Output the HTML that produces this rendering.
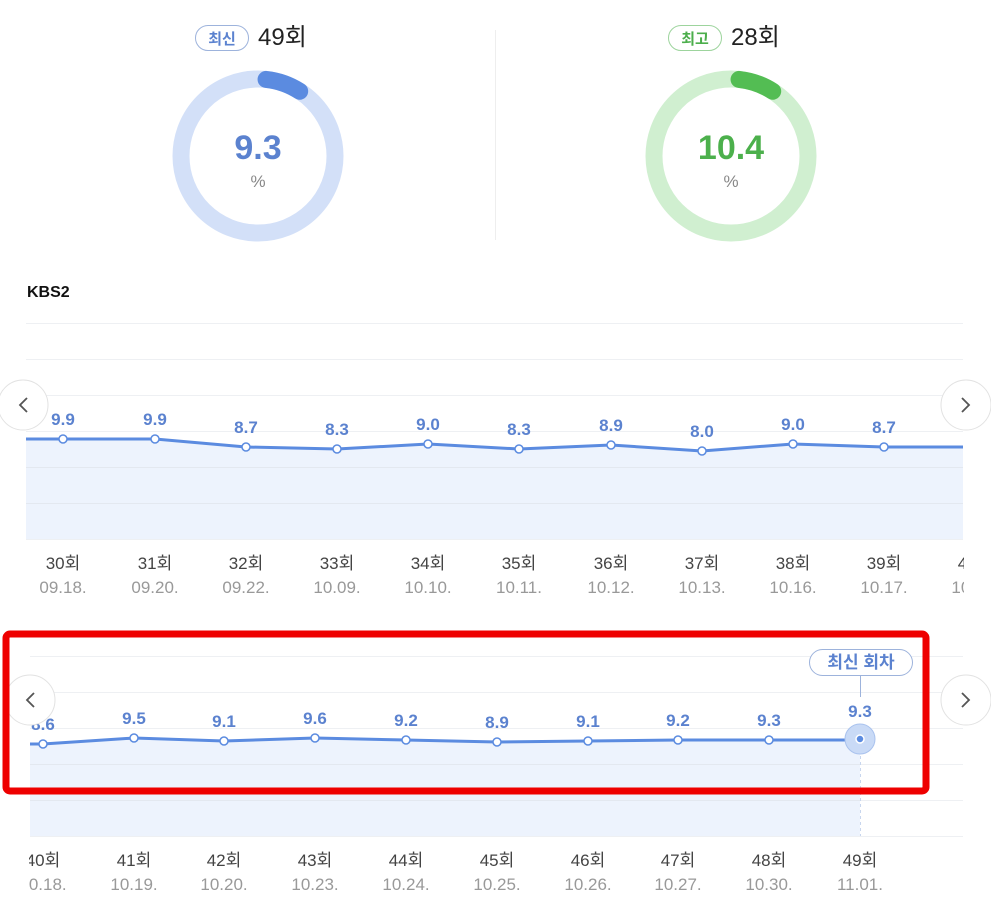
<!DOCTYPE html>
<html><head><meta charset="utf-8"><style>
body{margin:0;width:991px;height:917px;background:#fff;overflow:hidden;font-family:"Liberation Sans","Noto Sans CJK KR",sans-serif;}
svg text{font-family:"Liberation Sans","Noto Sans CJK KR",sans-serif;}
</style></head><body>
<svg width="991" height="917" viewBox="0 0 991 917" xmlns="http://www.w3.org/2000/svg">
<!-- header -->
<rect x="195.5" y="25.5" width="53" height="25" rx="12.5" fill="#fff" stroke="#9db3dc"/>
<text x="222" y="44" font-size="15" fill="#5b82cf" text-anchor="middle" font-weight="bold">최신</text>
<text x="258" y="45" font-size="24" fill="#222">49회</text>
<rect x="668.5" y="25.5" width="53" height="25" rx="12.5" fill="#fff" stroke="#9dd49d"/>
<text x="695" y="44" font-size="15" fill="#4cae4c" text-anchor="middle" font-weight="bold">최고</text>
<text x="731" y="45" font-size="24" fill="#222">28회</text>
<line x1="495.5" y1="30" x2="495.5" y2="240" stroke="#eee"/>
<circle cx="258" cy="156" r="77" fill="none" stroke="#d3e0f8" stroke-width="17"/>
<circle cx="258" cy="156" r="77" fill="none" stroke="#5b8be0" stroke-width="17" stroke-linecap="round" stroke-dasharray="36 500" transform="rotate(-84 258 156)"/>
<text x="258" y="159" font-size="34" font-weight="bold" fill="#5b82cf" text-anchor="middle">9.3</text>
<text x="258" y="187" font-size="17" fill="#888" text-anchor="middle">%</text>
<circle cx="731" cy="156" r="77" fill="none" stroke="#d0efd0" stroke-width="17"/>
<circle cx="731" cy="156" r="77" fill="none" stroke="#53bd53" stroke-width="17" stroke-linecap="round" stroke-dasharray="36 500" transform="rotate(-84 731 156)"/>
<text x="731" y="159" font-size="34" font-weight="bold" fill="#4cb04c" text-anchor="middle">10.4</text>
<text x="731" y="187" font-size="17" fill="#888" text-anchor="middle">%</text>
<text x="27" y="297" font-size="16" font-weight="bold" fill="#111">KBS2</text>

<!-- chart 1 -->
<g stroke="#eef0f3">
<line x1="26" y1="323.5" x2="963" y2="323.5"/><line x1="26" y1="359.5" x2="963" y2="359.5"/><line x1="26" y1="395.5" x2="963" y2="395.5"/><line x1="26" y1="431.5" x2="963" y2="431.5"/><line x1="26" y1="467.5" x2="963" y2="467.5"/><line x1="26" y1="503.5" x2="963" y2="503.5"/><line x1="26" y1="539.5" x2="963" y2="539.5"/>
</g>
<path d="M26 439 L63 439 L155 439 L246 447 L337 449 L428 444 L519 449 L611 445 L702 451 L793 444 L884 447 L963 447 L963 539 L26 539Z" fill="#edf3fd"/>
<g stroke="#e3e8f0"><line x1="26" y1="467.5" x2="963" y2="467.5"/><line x1="26" y1="503.5" x2="963" y2="503.5"/></g>
<path d="M26 439 L63 439 L155 439 L246 447 L337 449 L428 444 L519 449 L611 445 L702 451 L793 444 L884 447 L963 447" fill="none" stroke="#5b8be0" stroke-width="3"/>
<g fill="#fff" stroke="#5b8be0" stroke-width="1.5">
<circle cx="63" cy="439" r="4"/><circle cx="155" cy="439" r="4"/><circle cx="246" cy="447" r="4"/><circle cx="337" cy="449" r="4"/><circle cx="428" cy="444" r="4"/><circle cx="519" cy="449" r="4"/><circle cx="611" cy="445" r="4"/><circle cx="702" cy="451" r="4"/><circle cx="793" cy="444" r="4"/><circle cx="884" cy="447" r="4"/>
</g>
<g font-size="17" font-weight="bold" fill="#5b82cf" text-anchor="middle">
<text x="63" y="425">9.9</text><text x="155" y="425">9.9</text><text x="246" y="433">8.7</text><text x="337" y="435">8.3</text><text x="428" y="430">9.0</text><text x="519" y="435">8.3</text><text x="611" y="431">8.9</text><text x="702" y="437">8.0</text><text x="793" y="430">9.0</text><text x="884" y="433">8.7</text>
</g>
<g font-size="17" fill="#444" text-anchor="middle">
<text x="63" y="569">30회</text><text x="155" y="569">31회</text><text x="246" y="569">32회</text><text x="337" y="569">33회</text><text x="428" y="569">34회</text><text x="519" y="569">35회</text><text x="611" y="569">36회</text><text x="702" y="569">37회</text><text x="793" y="569">38회</text><text x="884" y="569">39회</text><text x="975" y="569">40회</text>
</g>
<g font-size="17" fill="#999" text-anchor="middle">
<text x="63" y="593">09.18.</text><text x="155" y="593">09.20.</text><text x="246" y="593">09.22.</text><text x="337" y="593">10.09.</text><text x="428" y="593">10.10.</text><text x="519" y="593">10.11.</text><text x="611" y="593">10.12.</text><text x="702" y="593">10.13.</text><text x="793" y="593">10.16.</text><text x="884" y="593">10.17.</text><text x="975" y="593">10.18.</text>
</g>
<rect x="964" y="545" width="30" height="60" fill="#fff"/>

<!-- chart 2 -->
<g stroke="#eef0f3">
<line x1="30" y1="656.5" x2="963" y2="656.5"/><line x1="30" y1="692.5" x2="963" y2="692.5"/><line x1="30" y1="728.5" x2="963" y2="728.5"/><line x1="30" y1="764.5" x2="963" y2="764.5"/><line x1="30" y1="800.5" x2="963" y2="800.5"/><line x1="30" y1="836.5" x2="963" y2="836.5"/>
</g>
<path d="M30 744 L43 744 L134 738 L224 741 L315 738 L406 740 L497 742 L588 741 L678 740 L769 740 L860 740 L860 836 L30 836Z" fill="#edf3fd"/>
<g stroke="#e3e8f0"><line x1="30" y1="764.5" x2="860" y2="764.5"/><line x1="30" y1="800.5" x2="860" y2="800.5"/></g>
<line x1="860.5" y1="750" x2="860.5" y2="836" stroke="#c8d6ee" stroke-dasharray="3 3"/>
<path d="M30 744 L43 744 L134 738 L224 741 L315 738 L406 740 L497 742 L588 741 L678 740 L769 740 L860 740" fill="none" stroke="#5b8be0" stroke-width="3"/>
<g fill="#fff" stroke="#5b8be0" stroke-width="1.5">
<circle cx="43" cy="744" r="4"/><circle cx="134" cy="738" r="4"/><circle cx="224" cy="741" r="4"/><circle cx="315" cy="738" r="4"/><circle cx="406" cy="740" r="4"/><circle cx="497" cy="742" r="4"/><circle cx="588" cy="741" r="4"/><circle cx="678" cy="740" r="4"/><circle cx="769" cy="740" r="4"/>
</g>
<circle cx="860" cy="739" r="15" fill="#c9daf6" stroke="#a9c2ee"/>
<circle cx="860" cy="739" r="4" fill="#5b8be0" stroke="#fff" stroke-width="1.5"/>
<line x1="860.5" y1="675" x2="860.5" y2="697" stroke="#9db3dc"/>
<rect x="809.5" y="649.5" width="103" height="26" rx="13" fill="#fff" stroke="#9db3dc"/>
<text x="861" y="668" font-size="17" font-weight="bold" fill="#5b82cf" text-anchor="middle">최신 회차</text>
<g font-size="17" font-weight="bold" fill="#5b82cf" text-anchor="middle">
<text x="43" y="730">8.6</text><text x="134" y="724">9.5</text><text x="224" y="727">9.1</text><text x="315" y="724">9.6</text><text x="406" y="726">9.2</text><text x="497" y="728">8.9</text><text x="588" y="727">9.1</text><text x="678" y="726">9.2</text><text x="769" y="726">9.3</text><text x="860" y="717">9.3</text>
</g>
<g font-size="17" fill="#444" text-anchor="middle">
<text x="43" y="866">40회</text><text x="134" y="866">41회</text><text x="224" y="866">42회</text><text x="315" y="866">43회</text><text x="406" y="866">44회</text><text x="497" y="866">45회</text><text x="588" y="866">46회</text><text x="678" y="866">47회</text><text x="769" y="866">48회</text><text x="860" y="866">49회</text>
</g>
<g font-size="17" fill="#999" text-anchor="middle">
<text x="43" y="890">10.18.</text><text x="134" y="890">10.19.</text><text x="224" y="890">10.20.</text><text x="315" y="890">10.23.</text><text x="406" y="890">10.24.</text><text x="497" y="890">10.25.</text><text x="588" y="890">10.26.</text><text x="678" y="890">10.27.</text><text x="769" y="890">10.30.</text><text x="860" y="890">11.01.</text>
</g>
<rect x="0" y="600" width="29" height="317" fill="#fff"/>

<!-- nav buttons -->
<g fill="#fff" stroke="#e2e2e2">
<circle cx="23" cy="405" r="25"/><circle cx="966" cy="405" r="25"/><circle cx="30" cy="700" r="25"/><circle cx="966" cy="700" r="25"/>
</g>
<g fill="none" stroke="#555" stroke-width="1.8">
<path d="M27 398 L20 405 L27 412"/><path d="M962 398 L969 405 L962 412"/><path d="M34 693 L27 700 L34 707"/><path d="M962 693 L969 700 L962 707"/>
</g>

<!-- red box -->
<rect x="6" y="634" width="920" height="157" rx="4" fill="none" stroke="#ee0000" stroke-width="7"/>
</svg>
</body></html>
